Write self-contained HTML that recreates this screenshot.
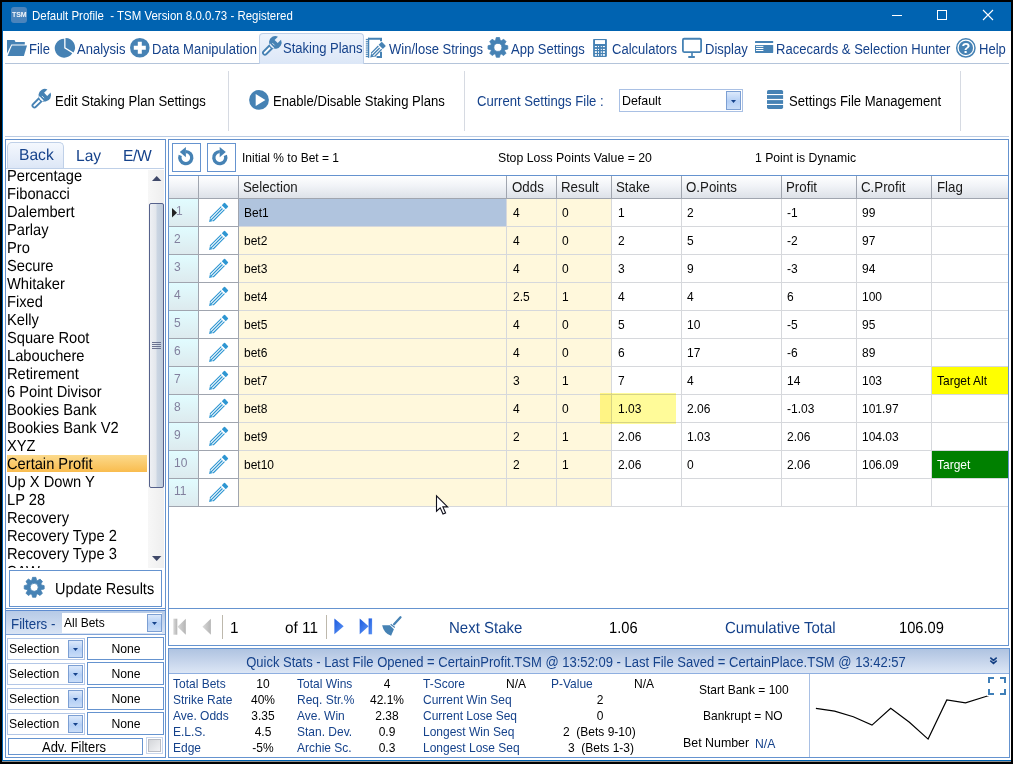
<!DOCTYPE html>
<html lang="en"><head><meta charset="utf-8"><title>TSM</title>
<style>
html,body{margin:0;padding:0}
body{width:1013px;height:764px;background:#000;position:relative;overflow:hidden;font-family:"Liberation Sans",sans-serif;}
.a{position:absolute;box-sizing:border-box}
.t{white-space:nowrap}
svg{display:block;overflow:visible}
</style></head><body>
<div class="a " style="left:2px;top:2px;width:1009px;height:760px;background:#fff"></div>
<div class="a " style="left:2px;top:2px;width:1px;height:759px;background:#0063B1"></div>
<div class="a " style="left:2px;top:760px;width:1009px;height:1px;background:#0063B1"></div>
<div class="a " style="left:2px;top:761px;width:1009px;height:1px;background:#8f8f8f"></div>
<div class="a " style="left:2px;top:2px;width:1009px;height:29px;background:#0063B1"></div>
<div class="a " style="left:11px;top:7px;width:16px;height:16px;background:#4A84BC;border-radius:3px"></div>
<div class="a t" style="left:12px;top:10px;line-height:10px;font-size:7.52px;color:#fff;transform:scaleX(0.9309);transform-origin:0 50%;font-weight:bold;letter-spacing:-0.1px;opacity:.92">TSM</div>
<div class="a t" style="left:32px;top:6px;line-height:20px;font-size:12.32px;color:#fff;transform:scaleX(0.9302);transform-origin:0 50%;">Default Profile&nbsp; - TSM Version 8.0.0.73 - Registered</div>
<div class="a " style="left:892px;top:15px;width:10px;height:1px;background:#fff"></div>
<div class="a " style="left:937px;top:10px;width:10px;height:10px;border:1px solid #fff"></div>
<svg class="a" style="left:983px;top:10px" width="10" height="10" viewBox="0 0 10 10"><path d="M0 0L10 10M10 0L0 10" stroke="#fff" stroke-width="1.1" fill="none"/></svg>
<div class="a " style="left:5px;top:63px;width:1004px;height:1px;background:#B4C4DA"></div>
<div class="a " style="left:259px;top:33px;width:105px;height:31px;background:linear-gradient(#EDF3FC,#DCE7F7);border:1px solid #BFD0E8;border-bottom:none;border-radius:4px 4px 0 0"></div>
<div class="a t" style="left:29.2px;top:39px;line-height:20px;font-size:14.01px;color:#15428B;transform:scaleX(0.93);transform-origin:0 50%;">File</div>
<div class="a t" style="left:77.4px;top:39px;line-height:20px;font-size:14.01px;color:#15428B;transform:scaleX(0.93);transform-origin:0 50%;">Analysis</div>
<div class="a t" style="left:152px;top:39px;line-height:20px;font-size:14.01px;color:#15428B;transform:scaleX(0.93);transform-origin:0 50%;">Data Manipulation</div>
<div class="a t" style="left:283.4px;top:38px;line-height:20px;font-size:14.01px;color:#15428B;transform:scaleX(0.93);transform-origin:0 50%;">Staking Plans</div>
<div class="a t" style="left:388.5px;top:39px;line-height:20px;font-size:14.01px;color:#15428B;transform:scaleX(0.93);transform-origin:0 50%;">Win/lose Strings</div>
<div class="a t" style="left:510.5px;top:39px;line-height:20px;font-size:14.01px;color:#15428B;transform:scaleX(0.93);transform-origin:0 50%;">App Settings</div>
<div class="a t" style="left:612.4px;top:39px;line-height:20px;font-size:14.01px;color:#15428B;transform:scaleX(0.93);transform-origin:0 50%;">Calculators</div>
<div class="a t" style="left:704.5px;top:39px;line-height:20px;font-size:14.01px;color:#15428B;transform:scaleX(0.93);transform-origin:0 50%;">Display</div>
<div class="a t" style="left:776px;top:39px;line-height:20px;font-size:14.01px;color:#15428B;transform:scaleX(0.93);transform-origin:0 50%;">Racecards &amp; Selection Hunter</div>
<div class="a t" style="left:978.6px;top:39px;line-height:20px;font-size:14.01px;color:#15428B;transform:scaleX(0.93);transform-origin:0 50%;">Help</div>
<svg class="a" style="left:7px;top:40px" width="20" height="16" viewBox="0 0 20 16"><path d="M0 0H7.5L8.5 2H17.8V4.6H4.3L0 13.5Z" fill="#4682B4"/><path d="M4.9 5.6H20L16.9 16H0.6Z" fill="#4682B4"/></svg>
<svg class="a" style="left:54px;top:37px" width="22" height="22" viewBox="0 0 22 22"><path d="M10.2 11.2L18.26 16.23A9.5 9.5 0 1 1 10.2 1.6999999999999993Z" fill="#4682B4"/><path d="M11.5 10.399999999999999L11.5 0.8999999999999986A9.5 9.5 0 0 1 19.56 15.43Z" fill="#4682B4"/></svg>
<svg class="a" style="left:130px;top:38px" width="20" height="20" viewBox="0 0 20 20"><circle cx="9.8" cy="9.8" r="9.8" fill="#4682B4"/><path d="M7.8 3.8h4v4h4v4h-4v4h-4v-4h-4v-4h4z" fill="#fff"/></svg>
<svg class="a" style="left:262px;top:36px" width="20" height="20" viewBox="0 0 20 20"><g transform="translate(13.3 6.4) rotate(45)"><path d="M-2.2 -1.2V-5.90A6.3 6.3 0 1 0 2.2 -5.90V-1.2ZM-2.9 4.5H2.9V14.6A2.9 2.9 0 0 1 -2.9 14.6Z" fill="#4682B4"/><path d="M-1 7.4H1V14.8A1 1 0 0 1 -1 14.8Z" fill="#fff"/><path d="M-1.6 2.6H1.6" stroke="#fff" stroke-width="0.7"/></g></svg>
<svg class="a" style="left:31px;top:89px" width="20" height="20" viewBox="0 0 20 20"><g transform="translate(13.8 6.2) rotate(45)"><path d="M-2.2 -1.2V-5.90A6.3 6.3 0 1 0 2.2 -5.90V-1.2ZM-2.9 4.5H2.9V14.6A2.9 2.9 0 0 1 -2.9 14.6Z" fill="#4682B4"/><path d="M-1 7.4H1V14.8A1 1 0 0 1 -1 14.8Z" fill="#fff"/><path d="M-1.6 2.6H1.6" stroke="#fff" stroke-width="0.7"/></g></svg>
<svg class="a" style="left:366px;top:34px" width="20" height="24" viewBox="0 0 20 24"><path d="M2 4.85H15V7.3M15 17.8V22.9H10.6" fill="none" stroke="#4682B4" stroke-width="2"/><path d="M2.6 3.8V23.8" stroke="#4682B4" stroke-width="1.3"/><rect x="-0.2" y="4.90" width="2.4" height="1" fill="#4682B4"/><rect x="-0.2" y="6.81" width="2.4" height="1" fill="#4682B4"/><rect x="-0.2" y="8.72" width="2.4" height="1" fill="#4682B4"/><rect x="-0.2" y="10.63" width="2.4" height="1" fill="#4682B4"/><rect x="-0.2" y="12.54" width="2.4" height="1" fill="#4682B4"/><rect x="-0.2" y="14.45" width="2.4" height="1" fill="#4682B4"/><rect x="-0.2" y="16.36" width="2.4" height="1" fill="#4682B4"/><rect x="-0.2" y="18.27" width="2.4" height="1" fill="#4682B4"/><rect x="-0.2" y="20.18" width="2.4" height="1" fill="#4682B4"/><rect x="-0.2" y="22.09" width="2.4" height="1" fill="#4682B4"/><g transform="translate(4.2 23.5) rotate(-45)"><path d="M0 0L4.8 -3.0H13.9V3.0H4.8Z" fill="#fff"/><path d="M0 0L4.8 -3.0L2.64 0L4.8 3.0Z" fill="#4682B4"/><path d="M3.84 -2.35H13.9M3.84 2.35H13.9" stroke="#4682B4" stroke-width="1.3" fill="none"/><path d="M2.40 0H13.3" stroke="#4682B4" stroke-width="1.4"/><path d="M14.9 -3.0H18.5Q19.3 -3.0 19.3 -2.2V2.2Q19.3 3.0 18.5 3.0H14.9Z" fill="#4682B4"/></g></svg>
<svg class="a" style="left:488px;top:37px" width="20" height="21" viewBox="0 0 20 21"><path d="M16.94 8.11L19.76 8.76L19.76 12.04L16.94 12.69L16.49 13.76L18.04 16.21L15.71 18.54L13.26 16.99L12.19 17.44L11.54 20.26L8.26 20.26L7.61 17.44L6.54 16.99L4.09 18.54L1.76 16.21L3.31 13.76L2.86 12.69L0.04 12.04L0.04 8.76L2.86 8.11L3.31 7.04L1.76 4.59L4.09 2.26L6.54 3.81L7.61 3.36L8.26 0.54L11.54 0.54L12.19 3.36L13.26 3.81L15.71 2.26L18.04 4.59L16.49 7.04ZM13.9 10.4A4.0 4.0 0 1 0 5.9 10.4A4.0 4.0 0 1 0 13.9 10.4Z" fill="#4682B4" fill-rule="evenodd" stroke="#4682B4" stroke-width="0.8" stroke-linejoin="round"/></svg>
<svg class="a" style="left:593px;top:39px" width="15" height="18" viewBox="0 0 15 18"><rect x="0.1" y="-0.1" width="13.8" height="18" rx="0.8" fill="#4682B4"/><rect x="2" y="1.1" width="10" height="3.9" fill="#fff"/><rect x="1.9" y="7.0" width="2.0" height="1.1" fill="#fff"/><rect x="5.0" y="7.0" width="1.0" height="1.1" fill="#fff"/><rect x="7.8" y="7.0" width="1.0" height="1.1" fill="#fff"/><rect x="9.9" y="7.0" width="2.0" height="1.1" fill="#fff"/><rect x="1.9" y="9.9" width="2.0" height="1.1" fill="#fff"/><rect x="5.0" y="9.9" width="1.0" height="1.1" fill="#fff"/><rect x="7.8" y="9.9" width="1.0" height="1.1" fill="#fff"/><rect x="9.9" y="9.9" width="2.0" height="1.1" fill="#fff"/><rect x="1.9" y="12.2" width="2.0" height="1.7" fill="#fff"/><rect x="5.0" y="12.2" width="1.0" height="1.7" fill="#fff"/><rect x="7.8" y="12.2" width="1.0" height="1.7" fill="#fff"/><rect x="9.9" y="12.2" width="2.0" height="1.7" fill="#fff"/><rect x="1.9" y="15.1" width="2.0" height="1.7" fill="#fff"/><rect x="5.0" y="15.1" width="1.0" height="1.7" fill="#fff"/><rect x="7.8" y="15.1" width="1.0" height="1.7" fill="#fff"/><rect x="9.9" y="15.1" width="2.0" height="1.7" fill="#fff"/></svg>
<svg class="a" style="left:682px;top:38px" width="20" height="20" viewBox="0 0 20 20"><rect x="0.9" y="0.75" width="18.2" height="13.3" rx="1.2" fill="#fff" stroke="#4682B4" stroke-width="1.8"/><rect x="9.2" y="14.9" width="1.6" height="3.6" fill="#4682B4"/><rect x="6.1" y="18" width="6.9" height="2" rx="0.8" fill="#4682B4"/></svg>
<svg class="a" style="left:755px;top:41px" width="19" height="13" viewBox="0 0 19 13"><rect x="0" y="0" width="18.2" height="2" rx="0.5" fill="#4682B4"/><rect x="0" y="4" width="18.2" height="7.9" rx="0.6" fill="#4682B4"/><path d="M1 5.4h7.4M1 7.5h7.4M1 9.5h7.4" stroke="#fff" stroke-width="1"/></svg>
<svg class="a" style="left:956px;top:38px" width="20" height="20" viewBox="0 0 20 20"><circle cx="9.85" cy="9.9" r="9.15" fill="#fff" stroke="#4682B4" stroke-width="1.5"/><circle cx="9.85" cy="9.9" r="7.15" fill="#4682B4"/><text x="9.9" y="15" font-family="Liberation Sans, sans-serif" font-weight="bold" font-size="14.5" fill="#fff" text-anchor="middle">?</text></svg>
<div class="a t" style="left:55.2px;top:91px;line-height:20px;font-size:14.08px;color:#000;transform:scaleX(0.9304);transform-origin:0 50%;">Edit Staking Plan Settings</div>
<div class="a " style="left:228px;top:71px;width:1px;height:60px;background:#D6DAE2"></div>
<svg class="a" style="left:249px;top:90px" width="20" height="20" viewBox="0 0 20 20"><circle cx="10" cy="9.9" r="9.9" fill="#4682B4"/><path d="M6.7 3.9L16.4 9.9L6.7 16Z" fill="#fff"/></svg>
<div class="a t" style="left:273.1px;top:91px;line-height:20px;font-size:14.08px;color:#000;transform:scaleX(0.9304);transform-origin:0 50%;">Enable/Disable Staking Plans</div>
<div class="a " style="left:464px;top:71px;width:1px;height:60px;background:#D6DAE2"></div>
<div class="a t" style="left:477.4px;top:91px;line-height:20px;font-size:14.08px;color:#15428B;transform:scaleX(0.9304);transform-origin:0 50%;">Current Settings File :</div>
<div class="a " style="left:619px;top:89px;width:124px;height:23px;background:#fff;border:1px solid #A9C0E4"></div>
<div class="a t" style="left:622px;top:91px;line-height:20px;font-size:13.33px;color:#000;transform:scaleX(0.9302);transform-origin:0 50%;">Default</div>
<div class="a " style="left:726px;top:91px;width:15px;height:19px;background:linear-gradient(#DCE9FB,#B4CFF5 55%,#C9DDF8);border:1px solid #7C9FD3"></div>
<svg class="a" style="left:731.0px;top:99.5px" width="5" height="3" viewBox="0 0 5 3"><path d="M0 0H5L2.5 3Z" fill="#15428B"/></svg>
<svg class="a" style="left:767px;top:90px" width="17" height="19" viewBox="0 0 17 19"><path d="M0 3.9V1.6Q0 0 1.6 0H14.5Q16.1 0 16.1 1.6V3.9Z" fill="#4682B4"/><rect x="0" y="5.1" width="16.1" height="3.8" fill="#4682B4"/><rect x="0" y="10.1" width="16.1" height="3.8" fill="#4682B4"/><path d="M0 15V17.3Q0 18.9 1.6 18.9H14.5Q16.1 18.9 16.1 17.3V15Z" fill="#4682B4"/></svg>
<div class="a t" style="left:789.4px;top:91px;line-height:20px;font-size:14.08px;color:#000;transform:scaleX(0.9304);transform-origin:0 50%;">Settings File Management</div>
<div class="a " style="left:960px;top:71px;width:1px;height:60px;background:#D6DAE2"></div>
<div class="a " style="left:5px;top:136px;width:1004px;height:1px;background:#BACBE3"></div>
<div class="a " style="left:5px;top:139px;width:161px;height:619px;border:1px solid #6593CF;background:#fff"></div>
<div class="a " style="left:7px;top:142px;width:57px;height:27px;background:linear-gradient(#F4F8FE,#DCE6F6);border:1px solid #BFD0E8;border-bottom:none;border-radius:5px 5px 0 0"></div>
<div class="a " style="left:6px;top:168px;width:158px;height:1px;background:#BFD0E8"></div>
<div class="a t" style="left:19px;top:146px;line-height:20px;font-size:16px;color:#15428B;transform:scaleX(0.975);transform-origin:0 50%;text-rendering:geometricPrecision;">Back</div>
<div class="a t" style="left:76px;top:147px;line-height:20px;font-size:16px;color:#15428B;transform:scaleX(0.975);transform-origin:0 50%;text-rendering:geometricPrecision;">Lay</div>
<div class="a t" style="left:123px;top:147px;line-height:20px;font-size:16px;color:#15428B;transform:scaleX(0.975);transform-origin:0 50%;letter-spacing:-0.4px;text-rendering:geometricPrecision;">E/W</div>
<div class="a " style="left:6px;top:169px;width:142px;height:399px;overflow:hidden"><div class="a t" style="left:1px;top:-1px;line-height:18px;font-size:16px;color:#000;text-rendering:geometricPrecision;transform:scaleX(0.9169);transform-origin:0 50%">Percentage</div><div class="a t" style="left:1px;top:17px;line-height:18px;font-size:16px;color:#000;text-rendering:geometricPrecision;transform:scaleX(0.9169);transform-origin:0 50%">Fibonacci</div><div class="a t" style="left:1px;top:35px;line-height:18px;font-size:16px;color:#000;text-rendering:geometricPrecision;transform:scaleX(0.9169);transform-origin:0 50%">Dalembert</div><div class="a t" style="left:1px;top:53px;line-height:18px;font-size:16px;color:#000;text-rendering:geometricPrecision;transform:scaleX(0.9169);transform-origin:0 50%">Parlay</div><div class="a t" style="left:1px;top:71px;line-height:18px;font-size:16px;color:#000;text-rendering:geometricPrecision;transform:scaleX(0.9169);transform-origin:0 50%">Pro</div><div class="a t" style="left:1px;top:89px;line-height:18px;font-size:16px;color:#000;text-rendering:geometricPrecision;transform:scaleX(0.9169);transform-origin:0 50%">Secure</div><div class="a t" style="left:1px;top:107px;line-height:18px;font-size:16px;color:#000;text-rendering:geometricPrecision;transform:scaleX(0.9169);transform-origin:0 50%">Whitaker</div><div class="a t" style="left:1px;top:125px;line-height:18px;font-size:16px;color:#000;text-rendering:geometricPrecision;transform:scaleX(0.9169);transform-origin:0 50%">Fixed</div><div class="a t" style="left:1px;top:143px;line-height:18px;font-size:16px;color:#000;text-rendering:geometricPrecision;transform:scaleX(0.9169);transform-origin:0 50%">Kelly</div><div class="a t" style="left:1px;top:161px;line-height:18px;font-size:16px;color:#000;text-rendering:geometricPrecision;transform:scaleX(0.9169);transform-origin:0 50%">Square Root</div><div class="a t" style="left:1px;top:179px;line-height:18px;font-size:16px;color:#000;text-rendering:geometricPrecision;transform:scaleX(0.9169);transform-origin:0 50%">Labouchere</div><div class="a t" style="left:1px;top:197px;line-height:18px;font-size:16px;color:#000;text-rendering:geometricPrecision;transform:scaleX(0.9169);transform-origin:0 50%">Retirement</div><div class="a t" style="left:1px;top:215px;line-height:18px;font-size:16px;color:#000;text-rendering:geometricPrecision;transform:scaleX(0.9169);transform-origin:0 50%">6 Point Divisor</div><div class="a t" style="left:1px;top:233px;line-height:18px;font-size:16px;color:#000;text-rendering:geometricPrecision;transform:scaleX(0.9169);transform-origin:0 50%">Bookies Bank</div><div class="a t" style="left:1px;top:251px;line-height:18px;font-size:16px;color:#000;text-rendering:geometricPrecision;transform:scaleX(0.9169);transform-origin:0 50%">Bookies Bank V2</div><div class="a t" style="left:1px;top:269px;line-height:18px;font-size:16px;color:#000;text-rendering:geometricPrecision;transform:scaleX(0.9169);transform-origin:0 50%">XYZ</div><div class="a" style="left:1px;top:286px;width:140px;height:17px;background:linear-gradient(#FCDA8C,#F9BC4E)"></div><div class="a t" style="left:1px;top:287px;line-height:18px;font-size:16px;color:#000;text-rendering:geometricPrecision;transform:scaleX(0.9169);transform-origin:0 50%">Certain Profit</div><div class="a t" style="left:1px;top:305px;line-height:18px;font-size:16px;color:#000;text-rendering:geometricPrecision;transform:scaleX(0.9169);transform-origin:0 50%">Up X Down Y</div><div class="a t" style="left:1px;top:323px;line-height:18px;font-size:16px;color:#000;text-rendering:geometricPrecision;transform:scaleX(0.9169);transform-origin:0 50%">LP 28</div><div class="a t" style="left:1px;top:341px;line-height:18px;font-size:16px;color:#000;text-rendering:geometricPrecision;transform:scaleX(0.9169);transform-origin:0 50%">Recovery</div><div class="a t" style="left:1px;top:359px;line-height:18px;font-size:16px;color:#000;text-rendering:geometricPrecision;transform:scaleX(0.9169);transform-origin:0 50%">Recovery Type 2</div><div class="a t" style="left:1px;top:377px;line-height:18px;font-size:16px;color:#000;text-rendering:geometricPrecision;transform:scaleX(0.9169);transform-origin:0 50%">Recovery Type 3</div><div class="a t" style="left:1px;top:395px;line-height:18px;font-size:16px;color:#000;text-rendering:geometricPrecision;transform:scaleX(0.9169);transform-origin:0 50%">SAW</div></div>
<div class="a " style="left:148px;top:170px;width:16px;height:398px;background:linear-gradient(90deg,#F7F7F7,#EEEEEE)"></div>
<svg class="a" style="left:152px;top:176px" width="9" height="5" viewBox="0 0 9 5"><path d="M0 5H9.4L4.7 0Z" fill="#3F4868"/></svg>
<svg class="a" style="left:152px;top:556px" width="9" height="5" viewBox="0 0 9 5"><path d="M0 0H9.4L4.7 5Z" fill="#3F4868"/></svg>
<div class="a " style="left:149px;top:203px;width:15px;height:285px;background:linear-gradient(90deg,#EEF0F4 0%,#E2E6EC 48%,#CBD6E3 52%,#BECADA 100%);border:1px solid #56628C;border-radius:2px"></div>
<svg class="a" style="left:152px;top:342px" width="9" height="8" viewBox="0 0 9 8"><path d="M0 .5H9M0 2.5H9M0 4.5H9M0 6.5H9" stroke="#6C7391" stroke-width="1"/></svg>
<div class="a " style="left:9px;top:570px;width:153px;height:37px;border:1px solid #6593CF;background:#fff"></div>
<div class="a t" style="left:55.3px;top:580px;line-height:20px;font-size:16px;color:#000;transform:scaleX(0.9062);transform-origin:0 50%;text-rendering:geometricPrecision;">Update Results</div>
<svg class="a" style="left:24px;top:577px" width="21" height="21" viewBox="0 0 21 21"><path d="M17.33 7.98L20.16 8.64L20.16 11.96L17.33 12.62L16.88 13.70L18.42 16.17L16.07 18.52L13.60 16.98L12.52 17.43L11.86 20.26L8.54 20.26L7.88 17.43L6.80 16.98L4.33 18.52L1.98 16.17L3.52 13.70L3.07 12.62L0.24 11.96L0.24 8.64L3.07 7.98L3.52 6.90L1.98 4.43L4.33 2.08L6.80 3.62L7.88 3.17L8.54 0.34L11.86 0.34L12.52 3.17L13.60 3.62L16.07 2.08L18.42 4.43L16.88 6.90ZM14.2 10.3A4.0 4.0 0 1 0 6.199999999999999 10.3A4.0 4.0 0 1 0 14.2 10.3Z" fill="#4682B4" fill-rule="evenodd" stroke="#4682B4" stroke-width="0.8" stroke-linejoin="round"/></svg>
<div class="a " style="left:6px;top:608px;width:159px;height:1px;background:#6593CF"></div>
<div class="a " style="left:6px;top:610px;width:159px;height:25px;background:linear-gradient(#B5C9E6,#DAE5F5)"></div>
<div class="a " style="left:6px;top:610px;width:159px;height:1px;background:#5E8CD0"></div>
<div class="a " style="left:6px;top:634px;width:159px;height:1px;background:#7FA3D8"></div>
<div class="a t" style="left:11px;top:614px;line-height:20px;font-size:14.33px;color:#15428B;transform:scaleX(0.9302);transform-origin:0 50%;">Filters -</div>
<div class="a " style="left:62px;top:613px;width:100px;height:20px;background:#fff"></div>
<div class="a t" style="left:64px;top:613px;line-height:20px;font-size:12.9px;color:#000;transform:scaleX(0.9302);transform-origin:0 50%;">All Bets</div>
<div class="a " style="left:147px;top:614px;width:15px;height:18px;background:linear-gradient(#DCE9FB,#B4CFF5 55%,#C9DDF8);border:1px solid #7C9FD3"></div>
<svg class="a" style="left:152.0px;top:622.0px" width="5" height="3" viewBox="0 0 5 3"><path d="M0 0H5L2.5 3Z" fill="#15428B"/></svg>
<div class="a " style="left:7px;top:638px;width:78px;height:22px;border:1px solid #B3C7E7;background:#fff"></div>
<div class="a t" style="left:9.3px;top:639px;line-height:20px;font-size:13.11px;color:#000;transform:scaleX(0.9306);transform-origin:0 50%;">Selection</div>
<div class="a " style="left:68px;top:640px;width:15px;height:18px;background:linear-gradient(#DCE9FB,#B4CFF5 55%,#C9DDF8);border:1px solid #7C9FD3"></div>
<svg class="a" style="left:73.0px;top:648.0px" width="5" height="3" viewBox="0 0 5 3"><path d="M0 0H5L2.5 3Z" fill="#15428B"/></svg>
<div class="a " style="left:87px;top:637px;width:77px;height:23px;border:1px solid #6593CF;background:#fff"></div>
<div class="a t" style="left:90.5px;width:70px;text-align:center;top:639px;line-height:20px;font-size:13.11px;color:#000;transform:scaleX(0.9306);">None</div>
<div class="a " style="left:7px;top:663px;width:78px;height:22px;border:1px solid #B3C7E7;background:#fff"></div>
<div class="a t" style="left:9.3px;top:664px;line-height:20px;font-size:13.11px;color:#000;transform:scaleX(0.9306);transform-origin:0 50%;">Selection</div>
<div class="a " style="left:68px;top:665px;width:15px;height:18px;background:linear-gradient(#DCE9FB,#B4CFF5 55%,#C9DDF8);border:1px solid #7C9FD3"></div>
<svg class="a" style="left:73.0px;top:673.0px" width="5" height="3" viewBox="0 0 5 3"><path d="M0 0H5L2.5 3Z" fill="#15428B"/></svg>
<div class="a " style="left:87px;top:662px;width:77px;height:23px;border:1px solid #6593CF;background:#fff"></div>
<div class="a t" style="left:90.5px;width:70px;text-align:center;top:664px;line-height:20px;font-size:13.11px;color:#000;transform:scaleX(0.9306);">None</div>
<div class="a " style="left:7px;top:688px;width:78px;height:22px;border:1px solid #B3C7E7;background:#fff"></div>
<div class="a t" style="left:9.3px;top:689px;line-height:20px;font-size:13.11px;color:#000;transform:scaleX(0.9306);transform-origin:0 50%;">Selection</div>
<div class="a " style="left:68px;top:690px;width:15px;height:18px;background:linear-gradient(#DCE9FB,#B4CFF5 55%,#C9DDF8);border:1px solid #7C9FD3"></div>
<svg class="a" style="left:73.0px;top:698.0px" width="5" height="3" viewBox="0 0 5 3"><path d="M0 0H5L2.5 3Z" fill="#15428B"/></svg>
<div class="a " style="left:87px;top:687px;width:77px;height:23px;border:1px solid #6593CF;background:#fff"></div>
<div class="a t" style="left:90.5px;width:70px;text-align:center;top:689px;line-height:20px;font-size:13.11px;color:#000;transform:scaleX(0.9306);">None</div>
<div class="a " style="left:7px;top:713px;width:78px;height:22px;border:1px solid #B3C7E7;background:#fff"></div>
<div class="a t" style="left:9.3px;top:714px;line-height:20px;font-size:13.11px;color:#000;transform:scaleX(0.9306);transform-origin:0 50%;">Selection</div>
<div class="a " style="left:68px;top:715px;width:15px;height:18px;background:linear-gradient(#DCE9FB,#B4CFF5 55%,#C9DDF8);border:1px solid #7C9FD3"></div>
<svg class="a" style="left:73.0px;top:723.0px" width="5" height="3" viewBox="0 0 5 3"><path d="M0 0H5L2.5 3Z" fill="#15428B"/></svg>
<div class="a " style="left:87px;top:712px;width:77px;height:23px;border:1px solid #6593CF;background:#fff"></div>
<div class="a t" style="left:90.5px;width:70px;text-align:center;top:714px;line-height:20px;font-size:13.11px;color:#000;transform:scaleX(0.9306);">None</div>
<div class="a " style="left:8px;top:738px;width:135px;height:17px;border:1px solid #6593CF;background:#fff"></div>
<div class="a t" style="left:14.0px;width:120px;text-align:center;top:737px;line-height:20px;font-size:13.97px;color:#000;transform:scaleX(0.9306);">Adv. Filters</div>
<div class="a " style="left:146px;top:737px;width:17px;height:17px;border:1px solid #C8D6EC;background:#fff"></div>
<div class="a " style="left:148px;top:739px;width:13px;height:13px;background:linear-gradient(135deg,#D4D6DA,#F2F3F5);border:1px solid #B8BCC4"></div>
<div class="a " style="left:168px;top:139px;width:841px;height:507px;border:1px solid #6593CF;background:#fff"></div>
<div class="a " style="left:172px;top:143px;width:29px;height:29px;border:1px solid #6593CF;background:#fff"></div>
<div class="a " style="left:207px;top:143px;width:29px;height:29px;border:1px solid #6593CF;background:#fff"></div>
<svg class="a" style="left:177px;top:148.1px" width="18" height="18" viewBox="0 0 18 18"><path d="M8.8 3.5999999999999996A6.0 6.0 0 1 1 3.24 7.35" fill="none" stroke="#4682B4" stroke-width="3.4"/><path d="M2.8 4.1L8.9 -1.1V9.3Z" fill="#4682B4"/></svg>
<svg class="a" style="left:211px;top:148.1px" width="18" height="18" viewBox="0 0 18 18"><g transform="translate(17.6 0) scale(-1 1)"><path d="M8.8 3.5999999999999996A6.0 6.0 0 1 1 3.24 7.35" fill="none" stroke="#4682B4" stroke-width="3.4"/><path d="M2.8 4.1L8.9 -1.1V9.3Z" fill="#4682B4"/></g></svg>
<div class="a t" style="left:242px;top:148px;line-height:20px;font-size:12.9px;color:#000;transform:scaleX(0.9302);transform-origin:0 50%;">Initial % to Bet = 1</div>
<div class="a t" style="left:498px;top:148px;line-height:20px;font-size:13.22px;color:#000;transform:scaleX(0.9304);transform-origin:0 50%;">Stop Loss Points Value = 20</div>
<div class="a t" style="left:755px;top:148px;line-height:20px;font-size:13.11px;color:#000;transform:scaleX(0.9306);transform-origin:0 50%;">1 Point is Dynamic</div>
<div class="a " style="left:169px;top:175px;width:839px;height:1px;background:#6593CF"></div>
<div class="a " style="left:169px;top:176px;width:839px;height:22px;background:linear-gradient(#FFFFFF,#F1F3F7 45%,#DDE1E8)"></div>
<div class="a " style="left:169px;top:198px;width:839px;height:1px;background:#A0A5AF"></div>
<div class="a " style="left:198px;top:176px;width:1px;height:22px;background:#A0A5AF"></div>
<div class="a " style="left:238px;top:176px;width:1px;height:22px;background:#A0A5AF"></div>
<div class="a " style="left:506px;top:176px;width:1px;height:22px;background:#A0A5AF"></div>
<div class="a " style="left:556px;top:176px;width:1px;height:22px;background:#A0A5AF"></div>
<div class="a " style="left:611px;top:176px;width:1px;height:22px;background:#A0A5AF"></div>
<div class="a " style="left:681px;top:176px;width:1px;height:22px;background:#A0A5AF"></div>
<div class="a " style="left:781px;top:176px;width:1px;height:22px;background:#A0A5AF"></div>
<div class="a " style="left:856px;top:176px;width:1px;height:22px;background:#A0A5AF"></div>
<div class="a " style="left:931px;top:176px;width:1px;height:22px;background:#A0A5AF"></div>
<div class="a t" style="left:243px;top:177px;line-height:20px;font-size:14.1px;color:#1a1a1a;transform:scaleX(0.9433);transform-origin:0 50%;">Selection</div>
<div class="a t" style="left:512px;top:177px;line-height:20px;font-size:14.1px;color:#1a1a1a;transform:scaleX(0.9433);transform-origin:0 50%;">Odds</div>
<div class="a t" style="left:561px;top:177px;line-height:20px;font-size:14.1px;color:#1a1a1a;transform:scaleX(0.9433);transform-origin:0 50%;">Result</div>
<div class="a t" style="left:616px;top:177px;line-height:20px;font-size:14.1px;color:#1a1a1a;transform:scaleX(0.9433);transform-origin:0 50%;">Stake</div>
<div class="a t" style="left:686px;top:177px;line-height:20px;font-size:14.1px;color:#1a1a1a;transform:scaleX(0.9433);transform-origin:0 50%;">O.Points</div>
<div class="a t" style="left:786px;top:177px;line-height:20px;font-size:14.1px;color:#1a1a1a;transform:scaleX(0.9433);transform-origin:0 50%;">Profit</div>
<div class="a t" style="left:861px;top:177px;line-height:20px;font-size:14.1px;color:#1a1a1a;transform:scaleX(0.9433);transform-origin:0 50%;">C.Profit</div>
<div class="a t" style="left:937px;top:177px;line-height:20px;font-size:14.1px;color:#1a1a1a;transform:scaleX(0.9433);transform-origin:0 50%;">Flag</div>
<div class="a " style="left:169px;top:199px;width:29px;height:27px;background:linear-gradient(#E1FCFF,#DDEAEE)"></div>
<div class="a " style="left:199px;top:199px;width:39px;height:27px;background:#fff"></div>
<div class="a " style="left:239px;top:199px;width:267px;height:27px;background:#B0C4DE"></div>
<div class="a " style="left:507px;top:199px;width:49px;height:27px;background:#FFF8DC"></div>
<div class="a " style="left:557px;top:199px;width:54px;height:27px;background:#FFF8DC"></div>
<div class="a " style="left:169px;top:226px;width:70px;height:1px;background:#A0A5AF"></div>
<div class="a " style="left:239px;top:226px;width:769px;height:1px;background:#D6D8DC"></div>
<div class="a " style="left:198px;top:199px;width:1px;height:28px;background:#A0A5AF"></div>
<div class="a " style="left:238px;top:199px;width:1px;height:28px;background:#A0A5AF"></div>
<div class="a " style="left:506px;top:199px;width:1px;height:28px;background:#D6D8DC"></div>
<div class="a " style="left:556px;top:199px;width:1px;height:28px;background:#D6D8DC"></div>
<div class="a " style="left:611px;top:199px;width:1px;height:28px;background:#D6D8DC"></div>
<div class="a " style="left:681px;top:199px;width:1px;height:28px;background:#D6D8DC"></div>
<div class="a " style="left:781px;top:199px;width:1px;height:28px;background:#D6D8DC"></div>
<div class="a " style="left:856px;top:199px;width:1px;height:28px;background:#D6D8DC"></div>
<div class="a " style="left:931px;top:199px;width:1px;height:28px;background:#D6D8DC"></div>
<div class="a t" style="left:176.3px;top:201px;line-height:20px;font-size:12.9px;color:#8C8CA8;transform:scaleX(0.9302);transform-origin:0 50%;">1</div>
<svg class="a" style="left:172px;top:207.5px" width="5" height="10" viewBox="0 0 5 10"><path d="M0 0L5 4.8L0 9.6Z" fill="#222"/></svg>
<svg class="a" style="left:209px;top:203px" width="20" height="20" viewBox="0 0 20 20"><g transform="translate(0.1 18.9) rotate(-45)"><path d="M0 0L4.4 -2.8H19.5V2.8H4.4Z" fill="#fff"/><path d="M0 0L4.4 -2.8L2.42 0L4.4 2.8Z" fill="#2E96D2"/><path d="M3.52 -2.25H19.5M3.52 2.25H19.5" stroke="#2E96D2" stroke-width="1.1" fill="none"/><path d="M2.20 0H18.9" stroke="#2E96D2" stroke-width="1.3"/><path d="M20.8 -2.8H23.8Q24.6 -2.8 24.6 -1.9999999999999998V1.9999999999999998Q24.6 2.8 23.8 2.8H20.8Z" fill="#2E96D2"/></g></svg>
<div class="a t" style="left:244px;top:203px;line-height:20px;font-size:12.9px;color:#000;transform:scaleX(0.9302);transform-origin:0 50%;">Bet1</div>
<div class="a t" style="left:512.5px;top:203px;line-height:20px;font-size:12.9px;color:#000;transform:scaleX(0.9302);transform-origin:0 50%;">4</div>
<div class="a t" style="left:562.3px;top:203px;line-height:20px;font-size:12.9px;color:#000;transform:scaleX(0.9302);transform-origin:0 50%;">0</div>
<div class="a t" style="left:618px;top:203px;line-height:20px;font-size:12.9px;color:#000;transform:scaleX(0.9302);transform-origin:0 50%;">1</div>
<div class="a t" style="left:687px;top:203px;line-height:20px;font-size:12.9px;color:#000;transform:scaleX(0.9302);transform-origin:0 50%;">2</div>
<div class="a t" style="left:787px;top:203px;line-height:20px;font-size:12.9px;color:#000;transform:scaleX(0.9302);transform-origin:0 50%;">-1</div>
<div class="a t" style="left:862px;top:203px;line-height:20px;font-size:12.9px;color:#000;transform:scaleX(0.9302);transform-origin:0 50%;">99</div>
<div class="a " style="left:169px;top:227px;width:29px;height:27px;background:linear-gradient(#E1FCFF,#DDEAEE)"></div>
<div class="a " style="left:199px;top:227px;width:39px;height:27px;background:#fff"></div>
<div class="a " style="left:239px;top:227px;width:267px;height:27px;background:#FFF8DC"></div>
<div class="a " style="left:507px;top:227px;width:49px;height:27px;background:#FFF8DC"></div>
<div class="a " style="left:557px;top:227px;width:54px;height:27px;background:#FFF8DC"></div>
<div class="a " style="left:169px;top:254px;width:70px;height:1px;background:#A0A5AF"></div>
<div class="a " style="left:239px;top:254px;width:769px;height:1px;background:#D6D8DC"></div>
<div class="a " style="left:198px;top:227px;width:1px;height:28px;background:#A0A5AF"></div>
<div class="a " style="left:238px;top:227px;width:1px;height:28px;background:#A0A5AF"></div>
<div class="a " style="left:506px;top:227px;width:1px;height:28px;background:#D6D8DC"></div>
<div class="a " style="left:556px;top:227px;width:1px;height:28px;background:#D6D8DC"></div>
<div class="a " style="left:611px;top:227px;width:1px;height:28px;background:#D6D8DC"></div>
<div class="a " style="left:681px;top:227px;width:1px;height:28px;background:#D6D8DC"></div>
<div class="a " style="left:781px;top:227px;width:1px;height:28px;background:#D6D8DC"></div>
<div class="a " style="left:856px;top:227px;width:1px;height:28px;background:#D6D8DC"></div>
<div class="a " style="left:931px;top:227px;width:1px;height:28px;background:#D6D8DC"></div>
<div class="a t" style="left:174.3px;top:229px;line-height:20px;font-size:12.9px;color:#82809E;transform:scaleX(0.9302);transform-origin:0 50%;">2</div>
<svg class="a" style="left:209px;top:231px" width="20" height="20" viewBox="0 0 20 20"><g transform="translate(0.1 18.9) rotate(-45)"><path d="M0 0L4.4 -2.8H19.5V2.8H4.4Z" fill="#fff"/><path d="M0 0L4.4 -2.8L2.42 0L4.4 2.8Z" fill="#2E96D2"/><path d="M3.52 -2.25H19.5M3.52 2.25H19.5" stroke="#2E96D2" stroke-width="1.1" fill="none"/><path d="M2.20 0H18.9" stroke="#2E96D2" stroke-width="1.3"/><path d="M20.8 -2.8H23.8Q24.6 -2.8 24.6 -1.9999999999999998V1.9999999999999998Q24.6 2.8 23.8 2.8H20.8Z" fill="#2E96D2"/></g></svg>
<div class="a t" style="left:244px;top:231px;line-height:20px;font-size:12.9px;color:#000;transform:scaleX(0.9302);transform-origin:0 50%;">bet2</div>
<div class="a t" style="left:512.5px;top:231px;line-height:20px;font-size:12.9px;color:#000;transform:scaleX(0.9302);transform-origin:0 50%;">4</div>
<div class="a t" style="left:562.3px;top:231px;line-height:20px;font-size:12.9px;color:#000;transform:scaleX(0.9302);transform-origin:0 50%;">0</div>
<div class="a t" style="left:618px;top:231px;line-height:20px;font-size:12.9px;color:#000;transform:scaleX(0.9302);transform-origin:0 50%;">2</div>
<div class="a t" style="left:687px;top:231px;line-height:20px;font-size:12.9px;color:#000;transform:scaleX(0.9302);transform-origin:0 50%;">5</div>
<div class="a t" style="left:787px;top:231px;line-height:20px;font-size:12.9px;color:#000;transform:scaleX(0.9302);transform-origin:0 50%;">-2</div>
<div class="a t" style="left:862px;top:231px;line-height:20px;font-size:12.9px;color:#000;transform:scaleX(0.9302);transform-origin:0 50%;">97</div>
<div class="a " style="left:169px;top:255px;width:29px;height:27px;background:linear-gradient(#E1FCFF,#DDEAEE)"></div>
<div class="a " style="left:199px;top:255px;width:39px;height:27px;background:#fff"></div>
<div class="a " style="left:239px;top:255px;width:267px;height:27px;background:#FFF8DC"></div>
<div class="a " style="left:507px;top:255px;width:49px;height:27px;background:#FFF8DC"></div>
<div class="a " style="left:557px;top:255px;width:54px;height:27px;background:#FFF8DC"></div>
<div class="a " style="left:169px;top:282px;width:70px;height:1px;background:#A0A5AF"></div>
<div class="a " style="left:239px;top:282px;width:769px;height:1px;background:#D6D8DC"></div>
<div class="a " style="left:198px;top:255px;width:1px;height:28px;background:#A0A5AF"></div>
<div class="a " style="left:238px;top:255px;width:1px;height:28px;background:#A0A5AF"></div>
<div class="a " style="left:506px;top:255px;width:1px;height:28px;background:#D6D8DC"></div>
<div class="a " style="left:556px;top:255px;width:1px;height:28px;background:#D6D8DC"></div>
<div class="a " style="left:611px;top:255px;width:1px;height:28px;background:#D6D8DC"></div>
<div class="a " style="left:681px;top:255px;width:1px;height:28px;background:#D6D8DC"></div>
<div class="a " style="left:781px;top:255px;width:1px;height:28px;background:#D6D8DC"></div>
<div class="a " style="left:856px;top:255px;width:1px;height:28px;background:#D6D8DC"></div>
<div class="a " style="left:931px;top:255px;width:1px;height:28px;background:#D6D8DC"></div>
<div class="a t" style="left:174.3px;top:257px;line-height:20px;font-size:12.9px;color:#82809E;transform:scaleX(0.9302);transform-origin:0 50%;">3</div>
<svg class="a" style="left:209px;top:259px" width="20" height="20" viewBox="0 0 20 20"><g transform="translate(0.1 18.9) rotate(-45)"><path d="M0 0L4.4 -2.8H19.5V2.8H4.4Z" fill="#fff"/><path d="M0 0L4.4 -2.8L2.42 0L4.4 2.8Z" fill="#2E96D2"/><path d="M3.52 -2.25H19.5M3.52 2.25H19.5" stroke="#2E96D2" stroke-width="1.1" fill="none"/><path d="M2.20 0H18.9" stroke="#2E96D2" stroke-width="1.3"/><path d="M20.8 -2.8H23.8Q24.6 -2.8 24.6 -1.9999999999999998V1.9999999999999998Q24.6 2.8 23.8 2.8H20.8Z" fill="#2E96D2"/></g></svg>
<div class="a t" style="left:244px;top:259px;line-height:20px;font-size:12.9px;color:#000;transform:scaleX(0.9302);transform-origin:0 50%;">bet3</div>
<div class="a t" style="left:512.5px;top:259px;line-height:20px;font-size:12.9px;color:#000;transform:scaleX(0.9302);transform-origin:0 50%;">4</div>
<div class="a t" style="left:562.3px;top:259px;line-height:20px;font-size:12.9px;color:#000;transform:scaleX(0.9302);transform-origin:0 50%;">0</div>
<div class="a t" style="left:618px;top:259px;line-height:20px;font-size:12.9px;color:#000;transform:scaleX(0.9302);transform-origin:0 50%;">3</div>
<div class="a t" style="left:687px;top:259px;line-height:20px;font-size:12.9px;color:#000;transform:scaleX(0.9302);transform-origin:0 50%;">9</div>
<div class="a t" style="left:787px;top:259px;line-height:20px;font-size:12.9px;color:#000;transform:scaleX(0.9302);transform-origin:0 50%;">-3</div>
<div class="a t" style="left:862px;top:259px;line-height:20px;font-size:12.9px;color:#000;transform:scaleX(0.9302);transform-origin:0 50%;">94</div>
<div class="a " style="left:169px;top:283px;width:29px;height:27px;background:linear-gradient(#E1FCFF,#DDEAEE)"></div>
<div class="a " style="left:199px;top:283px;width:39px;height:27px;background:#fff"></div>
<div class="a " style="left:239px;top:283px;width:267px;height:27px;background:#FFF8DC"></div>
<div class="a " style="left:507px;top:283px;width:49px;height:27px;background:#FFF8DC"></div>
<div class="a " style="left:557px;top:283px;width:54px;height:27px;background:#FFF8DC"></div>
<div class="a " style="left:169px;top:310px;width:70px;height:1px;background:#A0A5AF"></div>
<div class="a " style="left:239px;top:310px;width:769px;height:1px;background:#D6D8DC"></div>
<div class="a " style="left:198px;top:283px;width:1px;height:28px;background:#A0A5AF"></div>
<div class="a " style="left:238px;top:283px;width:1px;height:28px;background:#A0A5AF"></div>
<div class="a " style="left:506px;top:283px;width:1px;height:28px;background:#D6D8DC"></div>
<div class="a " style="left:556px;top:283px;width:1px;height:28px;background:#D6D8DC"></div>
<div class="a " style="left:611px;top:283px;width:1px;height:28px;background:#D6D8DC"></div>
<div class="a " style="left:681px;top:283px;width:1px;height:28px;background:#D6D8DC"></div>
<div class="a " style="left:781px;top:283px;width:1px;height:28px;background:#D6D8DC"></div>
<div class="a " style="left:856px;top:283px;width:1px;height:28px;background:#D6D8DC"></div>
<div class="a " style="left:931px;top:283px;width:1px;height:28px;background:#D6D8DC"></div>
<div class="a t" style="left:174.3px;top:285px;line-height:20px;font-size:12.9px;color:#82809E;transform:scaleX(0.9302);transform-origin:0 50%;">4</div>
<svg class="a" style="left:209px;top:287px" width="20" height="20" viewBox="0 0 20 20"><g transform="translate(0.1 18.9) rotate(-45)"><path d="M0 0L4.4 -2.8H19.5V2.8H4.4Z" fill="#fff"/><path d="M0 0L4.4 -2.8L2.42 0L4.4 2.8Z" fill="#2E96D2"/><path d="M3.52 -2.25H19.5M3.52 2.25H19.5" stroke="#2E96D2" stroke-width="1.1" fill="none"/><path d="M2.20 0H18.9" stroke="#2E96D2" stroke-width="1.3"/><path d="M20.8 -2.8H23.8Q24.6 -2.8 24.6 -1.9999999999999998V1.9999999999999998Q24.6 2.8 23.8 2.8H20.8Z" fill="#2E96D2"/></g></svg>
<div class="a t" style="left:244px;top:287px;line-height:20px;font-size:12.9px;color:#000;transform:scaleX(0.9302);transform-origin:0 50%;">bet4</div>
<div class="a t" style="left:512.5px;top:287px;line-height:20px;font-size:12.9px;color:#000;transform:scaleX(0.9302);transform-origin:0 50%;">2.5</div>
<div class="a t" style="left:562.3px;top:287px;line-height:20px;font-size:12.9px;color:#000;transform:scaleX(0.9302);transform-origin:0 50%;">1</div>
<div class="a t" style="left:618px;top:287px;line-height:20px;font-size:12.9px;color:#000;transform:scaleX(0.9302);transform-origin:0 50%;">4</div>
<div class="a t" style="left:687px;top:287px;line-height:20px;font-size:12.9px;color:#000;transform:scaleX(0.9302);transform-origin:0 50%;">4</div>
<div class="a t" style="left:787px;top:287px;line-height:20px;font-size:12.9px;color:#000;transform:scaleX(0.9302);transform-origin:0 50%;">6</div>
<div class="a t" style="left:862px;top:287px;line-height:20px;font-size:12.9px;color:#000;transform:scaleX(0.9302);transform-origin:0 50%;">100</div>
<div class="a " style="left:169px;top:311px;width:29px;height:27px;background:linear-gradient(#E1FCFF,#DDEAEE)"></div>
<div class="a " style="left:199px;top:311px;width:39px;height:27px;background:#fff"></div>
<div class="a " style="left:239px;top:311px;width:267px;height:27px;background:#FFF8DC"></div>
<div class="a " style="left:507px;top:311px;width:49px;height:27px;background:#FFF8DC"></div>
<div class="a " style="left:557px;top:311px;width:54px;height:27px;background:#FFF8DC"></div>
<div class="a " style="left:169px;top:338px;width:70px;height:1px;background:#A0A5AF"></div>
<div class="a " style="left:239px;top:338px;width:769px;height:1px;background:#D6D8DC"></div>
<div class="a " style="left:198px;top:311px;width:1px;height:28px;background:#A0A5AF"></div>
<div class="a " style="left:238px;top:311px;width:1px;height:28px;background:#A0A5AF"></div>
<div class="a " style="left:506px;top:311px;width:1px;height:28px;background:#D6D8DC"></div>
<div class="a " style="left:556px;top:311px;width:1px;height:28px;background:#D6D8DC"></div>
<div class="a " style="left:611px;top:311px;width:1px;height:28px;background:#D6D8DC"></div>
<div class="a " style="left:681px;top:311px;width:1px;height:28px;background:#D6D8DC"></div>
<div class="a " style="left:781px;top:311px;width:1px;height:28px;background:#D6D8DC"></div>
<div class="a " style="left:856px;top:311px;width:1px;height:28px;background:#D6D8DC"></div>
<div class="a " style="left:931px;top:311px;width:1px;height:28px;background:#D6D8DC"></div>
<div class="a t" style="left:174.3px;top:313px;line-height:20px;font-size:12.9px;color:#82809E;transform:scaleX(0.9302);transform-origin:0 50%;">5</div>
<svg class="a" style="left:209px;top:315px" width="20" height="20" viewBox="0 0 20 20"><g transform="translate(0.1 18.9) rotate(-45)"><path d="M0 0L4.4 -2.8H19.5V2.8H4.4Z" fill="#fff"/><path d="M0 0L4.4 -2.8L2.42 0L4.4 2.8Z" fill="#2E96D2"/><path d="M3.52 -2.25H19.5M3.52 2.25H19.5" stroke="#2E96D2" stroke-width="1.1" fill="none"/><path d="M2.20 0H18.9" stroke="#2E96D2" stroke-width="1.3"/><path d="M20.8 -2.8H23.8Q24.6 -2.8 24.6 -1.9999999999999998V1.9999999999999998Q24.6 2.8 23.8 2.8H20.8Z" fill="#2E96D2"/></g></svg>
<div class="a t" style="left:244px;top:315px;line-height:20px;font-size:12.9px;color:#000;transform:scaleX(0.9302);transform-origin:0 50%;">bet5</div>
<div class="a t" style="left:512.5px;top:315px;line-height:20px;font-size:12.9px;color:#000;transform:scaleX(0.9302);transform-origin:0 50%;">4</div>
<div class="a t" style="left:562.3px;top:315px;line-height:20px;font-size:12.9px;color:#000;transform:scaleX(0.9302);transform-origin:0 50%;">0</div>
<div class="a t" style="left:618px;top:315px;line-height:20px;font-size:12.9px;color:#000;transform:scaleX(0.9302);transform-origin:0 50%;">5</div>
<div class="a t" style="left:687px;top:315px;line-height:20px;font-size:12.9px;color:#000;transform:scaleX(0.9302);transform-origin:0 50%;">10</div>
<div class="a t" style="left:787px;top:315px;line-height:20px;font-size:12.9px;color:#000;transform:scaleX(0.9302);transform-origin:0 50%;">-5</div>
<div class="a t" style="left:862px;top:315px;line-height:20px;font-size:12.9px;color:#000;transform:scaleX(0.9302);transform-origin:0 50%;">95</div>
<div class="a " style="left:169px;top:339px;width:29px;height:27px;background:linear-gradient(#E1FCFF,#DDEAEE)"></div>
<div class="a " style="left:199px;top:339px;width:39px;height:27px;background:#fff"></div>
<div class="a " style="left:239px;top:339px;width:267px;height:27px;background:#FFF8DC"></div>
<div class="a " style="left:507px;top:339px;width:49px;height:27px;background:#FFF8DC"></div>
<div class="a " style="left:557px;top:339px;width:54px;height:27px;background:#FFF8DC"></div>
<div class="a " style="left:169px;top:366px;width:70px;height:1px;background:#A0A5AF"></div>
<div class="a " style="left:239px;top:366px;width:769px;height:1px;background:#D6D8DC"></div>
<div class="a " style="left:198px;top:339px;width:1px;height:28px;background:#A0A5AF"></div>
<div class="a " style="left:238px;top:339px;width:1px;height:28px;background:#A0A5AF"></div>
<div class="a " style="left:506px;top:339px;width:1px;height:28px;background:#D6D8DC"></div>
<div class="a " style="left:556px;top:339px;width:1px;height:28px;background:#D6D8DC"></div>
<div class="a " style="left:611px;top:339px;width:1px;height:28px;background:#D6D8DC"></div>
<div class="a " style="left:681px;top:339px;width:1px;height:28px;background:#D6D8DC"></div>
<div class="a " style="left:781px;top:339px;width:1px;height:28px;background:#D6D8DC"></div>
<div class="a " style="left:856px;top:339px;width:1px;height:28px;background:#D6D8DC"></div>
<div class="a " style="left:931px;top:339px;width:1px;height:28px;background:#D6D8DC"></div>
<div class="a t" style="left:174.3px;top:341px;line-height:20px;font-size:12.9px;color:#82809E;transform:scaleX(0.9302);transform-origin:0 50%;">6</div>
<svg class="a" style="left:209px;top:343px" width="20" height="20" viewBox="0 0 20 20"><g transform="translate(0.1 18.9) rotate(-45)"><path d="M0 0L4.4 -2.8H19.5V2.8H4.4Z" fill="#fff"/><path d="M0 0L4.4 -2.8L2.42 0L4.4 2.8Z" fill="#2E96D2"/><path d="M3.52 -2.25H19.5M3.52 2.25H19.5" stroke="#2E96D2" stroke-width="1.1" fill="none"/><path d="M2.20 0H18.9" stroke="#2E96D2" stroke-width="1.3"/><path d="M20.8 -2.8H23.8Q24.6 -2.8 24.6 -1.9999999999999998V1.9999999999999998Q24.6 2.8 23.8 2.8H20.8Z" fill="#2E96D2"/></g></svg>
<div class="a t" style="left:244px;top:343px;line-height:20px;font-size:12.9px;color:#000;transform:scaleX(0.9302);transform-origin:0 50%;">bet6</div>
<div class="a t" style="left:512.5px;top:343px;line-height:20px;font-size:12.9px;color:#000;transform:scaleX(0.9302);transform-origin:0 50%;">4</div>
<div class="a t" style="left:562.3px;top:343px;line-height:20px;font-size:12.9px;color:#000;transform:scaleX(0.9302);transform-origin:0 50%;">0</div>
<div class="a t" style="left:618px;top:343px;line-height:20px;font-size:12.9px;color:#000;transform:scaleX(0.9302);transform-origin:0 50%;">6</div>
<div class="a t" style="left:687px;top:343px;line-height:20px;font-size:12.9px;color:#000;transform:scaleX(0.9302);transform-origin:0 50%;">17</div>
<div class="a t" style="left:787px;top:343px;line-height:20px;font-size:12.9px;color:#000;transform:scaleX(0.9302);transform-origin:0 50%;">-6</div>
<div class="a t" style="left:862px;top:343px;line-height:20px;font-size:12.9px;color:#000;transform:scaleX(0.9302);transform-origin:0 50%;">89</div>
<div class="a " style="left:169px;top:367px;width:29px;height:27px;background:linear-gradient(#E1FCFF,#DDEAEE)"></div>
<div class="a " style="left:199px;top:367px;width:39px;height:27px;background:#fff"></div>
<div class="a " style="left:239px;top:367px;width:267px;height:27px;background:#FFF8DC"></div>
<div class="a " style="left:507px;top:367px;width:49px;height:27px;background:#FFF8DC"></div>
<div class="a " style="left:557px;top:367px;width:54px;height:27px;background:#FFF8DC"></div>
<div class="a " style="left:932px;top:367px;width:76px;height:27px;background:#FFFF00"></div>
<div class="a " style="left:169px;top:394px;width:70px;height:1px;background:#A0A5AF"></div>
<div class="a " style="left:239px;top:394px;width:769px;height:1px;background:#D6D8DC"></div>
<div class="a " style="left:198px;top:367px;width:1px;height:28px;background:#A0A5AF"></div>
<div class="a " style="left:238px;top:367px;width:1px;height:28px;background:#A0A5AF"></div>
<div class="a " style="left:506px;top:367px;width:1px;height:28px;background:#D6D8DC"></div>
<div class="a " style="left:556px;top:367px;width:1px;height:28px;background:#D6D8DC"></div>
<div class="a " style="left:611px;top:367px;width:1px;height:28px;background:#D6D8DC"></div>
<div class="a " style="left:681px;top:367px;width:1px;height:28px;background:#D6D8DC"></div>
<div class="a " style="left:781px;top:367px;width:1px;height:28px;background:#D6D8DC"></div>
<div class="a " style="left:856px;top:367px;width:1px;height:28px;background:#D6D8DC"></div>
<div class="a " style="left:931px;top:367px;width:1px;height:28px;background:#D6D8DC"></div>
<div class="a t" style="left:174.3px;top:369px;line-height:20px;font-size:12.9px;color:#82809E;transform:scaleX(0.9302);transform-origin:0 50%;">7</div>
<svg class="a" style="left:209px;top:371px" width="20" height="20" viewBox="0 0 20 20"><g transform="translate(0.1 18.9) rotate(-45)"><path d="M0 0L4.4 -2.8H19.5V2.8H4.4Z" fill="#fff"/><path d="M0 0L4.4 -2.8L2.42 0L4.4 2.8Z" fill="#2E96D2"/><path d="M3.52 -2.25H19.5M3.52 2.25H19.5" stroke="#2E96D2" stroke-width="1.1" fill="none"/><path d="M2.20 0H18.9" stroke="#2E96D2" stroke-width="1.3"/><path d="M20.8 -2.8H23.8Q24.6 -2.8 24.6 -1.9999999999999998V1.9999999999999998Q24.6 2.8 23.8 2.8H20.8Z" fill="#2E96D2"/></g></svg>
<div class="a t" style="left:244px;top:371px;line-height:20px;font-size:12.9px;color:#000;transform:scaleX(0.9302);transform-origin:0 50%;">bet7</div>
<div class="a t" style="left:512.5px;top:371px;line-height:20px;font-size:12.9px;color:#000;transform:scaleX(0.9302);transform-origin:0 50%;">3</div>
<div class="a t" style="left:562.3px;top:371px;line-height:20px;font-size:12.9px;color:#000;transform:scaleX(0.9302);transform-origin:0 50%;">1</div>
<div class="a t" style="left:618px;top:371px;line-height:20px;font-size:12.9px;color:#000;transform:scaleX(0.9302);transform-origin:0 50%;">7</div>
<div class="a t" style="left:687px;top:371px;line-height:20px;font-size:12.9px;color:#000;transform:scaleX(0.9302);transform-origin:0 50%;">4</div>
<div class="a t" style="left:787px;top:371px;line-height:20px;font-size:12.9px;color:#000;transform:scaleX(0.9302);transform-origin:0 50%;">14</div>
<div class="a t" style="left:862px;top:371px;line-height:20px;font-size:12.9px;color:#000;transform:scaleX(0.9302);transform-origin:0 50%;">103</div>
<div class="a t" style="left:937px;top:371px;line-height:20px;font-size:12.9px;color:#000;transform:scaleX(0.9302);transform-origin:0 50%;">Target Alt</div>
<div class="a " style="left:169px;top:395px;width:29px;height:27px;background:linear-gradient(#E1FCFF,#DDEAEE)"></div>
<div class="a " style="left:199px;top:395px;width:39px;height:27px;background:#fff"></div>
<div class="a " style="left:239px;top:395px;width:267px;height:27px;background:#FFF8DC"></div>
<div class="a " style="left:507px;top:395px;width:49px;height:27px;background:#FFF8DC"></div>
<div class="a " style="left:557px;top:395px;width:54px;height:27px;background:#FFF8DC"></div>
<div class="a " style="left:169px;top:422px;width:70px;height:1px;background:#A0A5AF"></div>
<div class="a " style="left:239px;top:422px;width:769px;height:1px;background:#D6D8DC"></div>
<div class="a " style="left:198px;top:395px;width:1px;height:28px;background:#A0A5AF"></div>
<div class="a " style="left:238px;top:395px;width:1px;height:28px;background:#A0A5AF"></div>
<div class="a " style="left:506px;top:395px;width:1px;height:28px;background:#D6D8DC"></div>
<div class="a " style="left:556px;top:395px;width:1px;height:28px;background:#D6D8DC"></div>
<div class="a " style="left:611px;top:395px;width:1px;height:28px;background:#D6D8DC"></div>
<div class="a " style="left:681px;top:395px;width:1px;height:28px;background:#D6D8DC"></div>
<div class="a " style="left:781px;top:395px;width:1px;height:28px;background:#D6D8DC"></div>
<div class="a " style="left:856px;top:395px;width:1px;height:28px;background:#D6D8DC"></div>
<div class="a " style="left:931px;top:395px;width:1px;height:28px;background:#D6D8DC"></div>
<div class="a t" style="left:174.3px;top:397px;line-height:20px;font-size:12.9px;color:#82809E;transform:scaleX(0.9302);transform-origin:0 50%;">8</div>
<svg class="a" style="left:209px;top:399px" width="20" height="20" viewBox="0 0 20 20"><g transform="translate(0.1 18.9) rotate(-45)"><path d="M0 0L4.4 -2.8H19.5V2.8H4.4Z" fill="#fff"/><path d="M0 0L4.4 -2.8L2.42 0L4.4 2.8Z" fill="#2E96D2"/><path d="M3.52 -2.25H19.5M3.52 2.25H19.5" stroke="#2E96D2" stroke-width="1.1" fill="none"/><path d="M2.20 0H18.9" stroke="#2E96D2" stroke-width="1.3"/><path d="M20.8 -2.8H23.8Q24.6 -2.8 24.6 -1.9999999999999998V1.9999999999999998Q24.6 2.8 23.8 2.8H20.8Z" fill="#2E96D2"/></g></svg>
<div class="a t" style="left:244px;top:399px;line-height:20px;font-size:12.9px;color:#000;transform:scaleX(0.9302);transform-origin:0 50%;">bet8</div>
<div class="a t" style="left:512.5px;top:399px;line-height:20px;font-size:12.9px;color:#000;transform:scaleX(0.9302);transform-origin:0 50%;">4</div>
<div class="a t" style="left:562.3px;top:399px;line-height:20px;font-size:12.9px;color:#000;transform:scaleX(0.9302);transform-origin:0 50%;">0</div>
<div class="a t" style="left:618px;top:399px;line-height:20px;font-size:12.9px;color:#000;transform:scaleX(0.9302);transform-origin:0 50%;">1.03</div>
<div class="a t" style="left:687px;top:399px;line-height:20px;font-size:12.9px;color:#000;transform:scaleX(0.9302);transform-origin:0 50%;">2.06</div>
<div class="a t" style="left:787px;top:399px;line-height:20px;font-size:12.9px;color:#000;transform:scaleX(0.9302);transform-origin:0 50%;">-1.03</div>
<div class="a t" style="left:862px;top:399px;line-height:20px;font-size:12.9px;color:#000;transform:scaleX(0.9302);transform-origin:0 50%;">101.97</div>
<div class="a " style="left:169px;top:423px;width:29px;height:27px;background:linear-gradient(#E1FCFF,#DDEAEE)"></div>
<div class="a " style="left:199px;top:423px;width:39px;height:27px;background:#fff"></div>
<div class="a " style="left:239px;top:423px;width:267px;height:27px;background:#FFF8DC"></div>
<div class="a " style="left:507px;top:423px;width:49px;height:27px;background:#FFF8DC"></div>
<div class="a " style="left:557px;top:423px;width:54px;height:27px;background:#FFF8DC"></div>
<div class="a " style="left:169px;top:450px;width:70px;height:1px;background:#A0A5AF"></div>
<div class="a " style="left:239px;top:450px;width:769px;height:1px;background:#D6D8DC"></div>
<div class="a " style="left:198px;top:423px;width:1px;height:28px;background:#A0A5AF"></div>
<div class="a " style="left:238px;top:423px;width:1px;height:28px;background:#A0A5AF"></div>
<div class="a " style="left:506px;top:423px;width:1px;height:28px;background:#D6D8DC"></div>
<div class="a " style="left:556px;top:423px;width:1px;height:28px;background:#D6D8DC"></div>
<div class="a " style="left:611px;top:423px;width:1px;height:28px;background:#D6D8DC"></div>
<div class="a " style="left:681px;top:423px;width:1px;height:28px;background:#D6D8DC"></div>
<div class="a " style="left:781px;top:423px;width:1px;height:28px;background:#D6D8DC"></div>
<div class="a " style="left:856px;top:423px;width:1px;height:28px;background:#D6D8DC"></div>
<div class="a " style="left:931px;top:423px;width:1px;height:28px;background:#D6D8DC"></div>
<div class="a t" style="left:174.3px;top:425px;line-height:20px;font-size:12.9px;color:#82809E;transform:scaleX(0.9302);transform-origin:0 50%;">9</div>
<svg class="a" style="left:209px;top:427px" width="20" height="20" viewBox="0 0 20 20"><g transform="translate(0.1 18.9) rotate(-45)"><path d="M0 0L4.4 -2.8H19.5V2.8H4.4Z" fill="#fff"/><path d="M0 0L4.4 -2.8L2.42 0L4.4 2.8Z" fill="#2E96D2"/><path d="M3.52 -2.25H19.5M3.52 2.25H19.5" stroke="#2E96D2" stroke-width="1.1" fill="none"/><path d="M2.20 0H18.9" stroke="#2E96D2" stroke-width="1.3"/><path d="M20.8 -2.8H23.8Q24.6 -2.8 24.6 -1.9999999999999998V1.9999999999999998Q24.6 2.8 23.8 2.8H20.8Z" fill="#2E96D2"/></g></svg>
<div class="a t" style="left:244px;top:427px;line-height:20px;font-size:12.9px;color:#000;transform:scaleX(0.9302);transform-origin:0 50%;">bet9</div>
<div class="a t" style="left:512.5px;top:427px;line-height:20px;font-size:12.9px;color:#000;transform:scaleX(0.9302);transform-origin:0 50%;">2</div>
<div class="a t" style="left:562.3px;top:427px;line-height:20px;font-size:12.9px;color:#000;transform:scaleX(0.9302);transform-origin:0 50%;">1</div>
<div class="a t" style="left:618px;top:427px;line-height:20px;font-size:12.9px;color:#000;transform:scaleX(0.9302);transform-origin:0 50%;">2.06</div>
<div class="a t" style="left:687px;top:427px;line-height:20px;font-size:12.9px;color:#000;transform:scaleX(0.9302);transform-origin:0 50%;">1.03</div>
<div class="a t" style="left:787px;top:427px;line-height:20px;font-size:12.9px;color:#000;transform:scaleX(0.9302);transform-origin:0 50%;">2.06</div>
<div class="a t" style="left:862px;top:427px;line-height:20px;font-size:12.9px;color:#000;transform:scaleX(0.9302);transform-origin:0 50%;">104.03</div>
<div class="a " style="left:169px;top:451px;width:29px;height:27px;background:linear-gradient(#E1FCFF,#DDEAEE)"></div>
<div class="a " style="left:199px;top:451px;width:39px;height:27px;background:#fff"></div>
<div class="a " style="left:239px;top:451px;width:267px;height:27px;background:#FFF8DC"></div>
<div class="a " style="left:507px;top:451px;width:49px;height:27px;background:#FFF8DC"></div>
<div class="a " style="left:557px;top:451px;width:54px;height:27px;background:#FFF8DC"></div>
<div class="a " style="left:932px;top:451px;width:76px;height:27px;background:#008000"></div>
<div class="a " style="left:169px;top:478px;width:70px;height:1px;background:#A0A5AF"></div>
<div class="a " style="left:239px;top:478px;width:769px;height:1px;background:#D6D8DC"></div>
<div class="a " style="left:198px;top:451px;width:1px;height:28px;background:#A0A5AF"></div>
<div class="a " style="left:238px;top:451px;width:1px;height:28px;background:#A0A5AF"></div>
<div class="a " style="left:506px;top:451px;width:1px;height:28px;background:#D6D8DC"></div>
<div class="a " style="left:556px;top:451px;width:1px;height:28px;background:#D6D8DC"></div>
<div class="a " style="left:611px;top:451px;width:1px;height:28px;background:#D6D8DC"></div>
<div class="a " style="left:681px;top:451px;width:1px;height:28px;background:#D6D8DC"></div>
<div class="a " style="left:781px;top:451px;width:1px;height:28px;background:#D6D8DC"></div>
<div class="a " style="left:856px;top:451px;width:1px;height:28px;background:#D6D8DC"></div>
<div class="a " style="left:931px;top:451px;width:1px;height:28px;background:#D6D8DC"></div>
<div class="a t" style="left:174.3px;top:453px;line-height:20px;font-size:12.9px;color:#82809E;transform:scaleX(0.9302);transform-origin:0 50%;">10</div>
<svg class="a" style="left:209px;top:455px" width="20" height="20" viewBox="0 0 20 20"><g transform="translate(0.1 18.9) rotate(-45)"><path d="M0 0L4.4 -2.8H19.5V2.8H4.4Z" fill="#fff"/><path d="M0 0L4.4 -2.8L2.42 0L4.4 2.8Z" fill="#2E96D2"/><path d="M3.52 -2.25H19.5M3.52 2.25H19.5" stroke="#2E96D2" stroke-width="1.1" fill="none"/><path d="M2.20 0H18.9" stroke="#2E96D2" stroke-width="1.3"/><path d="M20.8 -2.8H23.8Q24.6 -2.8 24.6 -1.9999999999999998V1.9999999999999998Q24.6 2.8 23.8 2.8H20.8Z" fill="#2E96D2"/></g></svg>
<div class="a t" style="left:244px;top:455px;line-height:20px;font-size:12.9px;color:#000;transform:scaleX(0.9302);transform-origin:0 50%;">bet10</div>
<div class="a t" style="left:512.5px;top:455px;line-height:20px;font-size:12.9px;color:#000;transform:scaleX(0.9302);transform-origin:0 50%;">2</div>
<div class="a t" style="left:562.3px;top:455px;line-height:20px;font-size:12.9px;color:#000;transform:scaleX(0.9302);transform-origin:0 50%;">1</div>
<div class="a t" style="left:618px;top:455px;line-height:20px;font-size:12.9px;color:#000;transform:scaleX(0.9302);transform-origin:0 50%;">2.06</div>
<div class="a t" style="left:687px;top:455px;line-height:20px;font-size:12.9px;color:#000;transform:scaleX(0.9302);transform-origin:0 50%;">0</div>
<div class="a t" style="left:787px;top:455px;line-height:20px;font-size:12.9px;color:#000;transform:scaleX(0.9302);transform-origin:0 50%;">2.06</div>
<div class="a t" style="left:862px;top:455px;line-height:20px;font-size:12.9px;color:#000;transform:scaleX(0.9302);transform-origin:0 50%;">106.09</div>
<div class="a t" style="left:937px;top:455px;line-height:20px;font-size:12.9px;color:#fff;transform:scaleX(0.9302);transform-origin:0 50%;">Target</div>
<div class="a " style="left:169px;top:479px;width:29px;height:27px;background:linear-gradient(#E1FCFF,#DDEAEE)"></div>
<div class="a " style="left:199px;top:479px;width:39px;height:27px;background:#fff"></div>
<div class="a " style="left:239px;top:479px;width:267px;height:27px;background:#FFF8DC"></div>
<div class="a " style="left:507px;top:479px;width:49px;height:27px;background:#FFF8DC"></div>
<div class="a " style="left:557px;top:479px;width:54px;height:27px;background:#FFF8DC"></div>
<div class="a " style="left:169px;top:506px;width:70px;height:1px;background:#A0A5AF"></div>
<div class="a " style="left:239px;top:506px;width:769px;height:1px;background:#D6D8DC"></div>
<div class="a " style="left:198px;top:479px;width:1px;height:28px;background:#A0A5AF"></div>
<div class="a " style="left:238px;top:479px;width:1px;height:28px;background:#A0A5AF"></div>
<div class="a " style="left:506px;top:479px;width:1px;height:28px;background:#D6D8DC"></div>
<div class="a " style="left:556px;top:479px;width:1px;height:28px;background:#D6D8DC"></div>
<div class="a " style="left:611px;top:479px;width:1px;height:28px;background:#D6D8DC"></div>
<div class="a " style="left:681px;top:479px;width:1px;height:28px;background:#D6D8DC"></div>
<div class="a " style="left:781px;top:479px;width:1px;height:28px;background:#D6D8DC"></div>
<div class="a " style="left:856px;top:479px;width:1px;height:28px;background:#D6D8DC"></div>
<div class="a " style="left:931px;top:479px;width:1px;height:28px;background:#D6D8DC"></div>
<div class="a t" style="left:174.3px;top:481px;line-height:20px;font-size:12.9px;color:#82809E;transform:scaleX(0.9302);transform-origin:0 50%;">11</div>
<svg class="a" style="left:209px;top:483px" width="20" height="20" viewBox="0 0 20 20"><g transform="translate(0.1 18.9) rotate(-45)"><path d="M0 0L4.4 -2.8H19.5V2.8H4.4Z" fill="#fff"/><path d="M0 0L4.4 -2.8L2.42 0L4.4 2.8Z" fill="#2E96D2"/><path d="M3.52 -2.25H19.5M3.52 2.25H19.5" stroke="#2E96D2" stroke-width="1.1" fill="none"/><path d="M2.20 0H18.9" stroke="#2E96D2" stroke-width="1.3"/><path d="M20.8 -2.8H23.8Q24.6 -2.8 24.6 -1.9999999999999998V1.9999999999999998Q24.6 2.8 23.8 2.8H20.8Z" fill="#2E96D2"/></g></svg>
<div class="a " style="left:600px;top:393px;width:76px;height:31px;background:#FFFB99;mix-blend-mode:multiply"></div>
<svg class="a" style="left:436px;top:495px" width="13" height="20" viewBox="0 0 13 20"><path d="M0.5 0.8V16.2L4.2 12.8L7 19L9.6 17.9L6.9 11.9H11.6Z" fill="#fff" stroke="#10101c" stroke-width="1.1" stroke-linejoin="miter"/></svg>
<div class="a " style="left:169px;top:608px;width:839px;height:1px;background:#6593CF"></div>
<svg width="0" height="0" style="position:absolute"><defs><linearGradient id="gg" x1="0" x2="1" y1="0" y2="0"><stop offset="0" stop-color="#DADADA"/><stop offset="1" stop-color="#B4B4B4"/></linearGradient><linearGradient id="gb" x1="0" x2="1" y1="0" y2="1"><stop offset="0" stop-color="#1A59DE"/><stop offset="1" stop-color="#6298F6"/></linearGradient></defs></svg>
<svg class="a" style="left:173px;top:618px" width="13" height="17" viewBox="0 0 13 17"><rect x="0.3" y="0.7" width="4" height="16" fill="url(#gg)"/><path d="M12.8 0.7V16.7L4.5 8.7Z" fill="url(#gg)"/></svg>
<svg class="a" style="left:202px;top:618px" width="9" height="17" viewBox="0 0 9 17"><path d="M8.9 0.7V16.7L0.4 8.7Z" fill="url(#gg)"/></svg>
<div class="a " style="left:222px;top:615px;width:1px;height:24px;background:#BDB8AC"></div>
<div class="a t" style="left:230px;top:619px;line-height:20px;font-size:16px;color:#000;transform:scaleX(0.9563);transform-origin:0 50%;text-rendering:geometricPrecision;">1</div>
<div class="a t" style="left:285px;top:619px;line-height:20px;font-size:16px;color:#000;transform:scaleX(0.9563);transform-origin:0 50%;text-rendering:geometricPrecision;">of 11</div>
<div class="a " style="left:326px;top:615px;width:1px;height:24px;background:#BDB8AC"></div>
<svg class="a" style="left:334px;top:618px" width="10" height="17" viewBox="0 0 10 17"><path d="M0.4 0.4V16.3L9.7 8.35Z" fill="url(#gb)"/></svg>
<svg class="a" style="left:359px;top:618px" width="14" height="17" viewBox="0 0 14 17"><path d="M0.7 0.4V16.3L9.6 8.35Z" fill="url(#gb)"/><rect x="9.6" y="0.4" width="3.5" height="15.9" fill="url(#gb)"/></svg>
<svg class="a" style="left:381px;top:616px" width="21" height="21" viewBox="0 0 21 21"><path d="M19.5 1.3L13.1 8.2" stroke="#4682B4" stroke-width="2.3" stroke-linecap="round"/><path d="M9.7 8.2L13.8 11.5" stroke="#4682B4" stroke-width="1.1"/><path d="M1.1 9.2L8.9 9.2L12.9 13.3L10.1 19.8Q3 17.5 1.1 9.2Z" fill="#4682B4"/></svg>
<div class="a t" style="left:449px;top:619px;line-height:20px;font-size:16px;color:#15428B;transform:scaleX(0.9375);transform-origin:0 50%;text-rendering:geometricPrecision;">Next Stake</div>
<div class="a t" style="left:608.5px;top:619px;line-height:20px;font-size:16px;color:#000;transform:scaleX(0.9169);transform-origin:0 50%;text-rendering:geometricPrecision;">1.06</div>
<div class="a t" style="left:725px;top:619px;line-height:20px;font-size:16px;color:#15428B;transform:scaleX(0.9375);transform-origin:0 50%;text-rendering:geometricPrecision;">Cumulative Total</div>
<div class="a t" style="left:899px;top:619px;line-height:20px;font-size:16px;color:#000;transform:scaleX(0.9169);transform-origin:0 50%;text-rendering:geometricPrecision;">106.09</div>
<div class="a " style="left:168px;top:648px;width:842px;height:110px;border:1px solid #6593CF;background:#fff"></div>
<div class="a " style="left:169px;top:649px;width:840px;height:24px;background:linear-gradient(#AFC3E1,#DCE6F5)"></div>
<div class="a " style="left:169px;top:673px;width:840px;height:1px;background:#8FAFE0"></div>
<div class="a t" style="left:176.0px;width:800px;text-align:center;top:652px;line-height:20px;font-size:14.01px;color:#15428B;transform:scaleX(0.93);">Quick Stats - Last File Opened = CertainProfit.TSM @ 13:52:09 - Last File Saved = CertainPlace.TSM @ 13:42:57</div>
<svg class="a" style="left:990px;top:657px" width="7" height="7" viewBox="0 0 7 7"><path d="M0.3 0.6L3.5 3.4L6.7 0.6M0.3 3.6L3.5 6.4L6.7 3.6" fill="none" stroke="#123E82" stroke-width="1.5"/></svg>
<div class="a t" style="left:173px;top:674px;line-height:20px;font-size:12.9px;color:#15428B;transform:scaleX(0.9302);transform-origin:0 50%;">Total Bets</div>
<div class="a t" style="left:232.5px;width:60px;text-align:center;top:674px;line-height:20px;font-size:12.9px;color:#000;transform:scaleX(0.9302);">10</div>
<div class="a t" style="left:297px;top:674px;line-height:20px;font-size:12.9px;color:#15428B;transform:scaleX(0.9302);transform-origin:0 50%;">Total Wins</div>
<div class="a t" style="left:357.0px;width:60px;text-align:center;top:674px;line-height:20px;font-size:12.9px;color:#000;transform:scaleX(0.9302);">4</div>
<div class="a t" style="left:423px;top:674px;line-height:20px;font-size:12.9px;color:#15428B;transform:scaleX(0.9302);transform-origin:0 50%;">T-Score</div>
<div class="a t" style="left:173px;top:690px;line-height:20px;font-size:12.9px;color:#15428B;transform:scaleX(0.9302);transform-origin:0 50%;">Strike Rate</div>
<div class="a t" style="left:232.5px;width:60px;text-align:center;top:690px;line-height:20px;font-size:12.9px;color:#000;transform:scaleX(0.9302);">40%</div>
<div class="a t" style="left:297px;top:690px;line-height:20px;font-size:12.9px;color:#15428B;transform:scaleX(0.9302);transform-origin:0 50%;">Req. Str.%</div>
<div class="a t" style="left:357.0px;width:60px;text-align:center;top:690px;line-height:20px;font-size:12.9px;color:#000;transform:scaleX(0.9302);">42.1%</div>
<div class="a t" style="left:423px;top:690px;line-height:20px;font-size:12.9px;color:#15428B;transform:scaleX(0.9302);transform-origin:0 50%;">Current Win Seq</div>
<div class="a t" style="left:173px;top:706px;line-height:20px;font-size:12.9px;color:#15428B;transform:scaleX(0.9302);transform-origin:0 50%;">Ave. Odds</div>
<div class="a t" style="left:232.5px;width:60px;text-align:center;top:706px;line-height:20px;font-size:12.9px;color:#000;transform:scaleX(0.9302);">3.35</div>
<div class="a t" style="left:297px;top:706px;line-height:20px;font-size:12.9px;color:#15428B;transform:scaleX(0.9302);transform-origin:0 50%;">Ave. Win</div>
<div class="a t" style="left:357.0px;width:60px;text-align:center;top:706px;line-height:20px;font-size:12.9px;color:#000;transform:scaleX(0.9302);">2.38</div>
<div class="a t" style="left:423px;top:706px;line-height:20px;font-size:12.9px;color:#15428B;transform:scaleX(0.9302);transform-origin:0 50%;">Current Lose Seq</div>
<div class="a t" style="left:173px;top:722px;line-height:20px;font-size:12.9px;color:#15428B;transform:scaleX(0.9302);transform-origin:0 50%;">E.L.S.</div>
<div class="a t" style="left:232.5px;width:60px;text-align:center;top:722px;line-height:20px;font-size:12.9px;color:#000;transform:scaleX(0.9302);">4.5</div>
<div class="a t" style="left:297px;top:722px;line-height:20px;font-size:12.9px;color:#15428B;transform:scaleX(0.9302);transform-origin:0 50%;">Stan. Dev.</div>
<div class="a t" style="left:357.0px;width:60px;text-align:center;top:722px;line-height:20px;font-size:12.9px;color:#000;transform:scaleX(0.9302);">0.9</div>
<div class="a t" style="left:423px;top:722px;line-height:20px;font-size:12.9px;color:#15428B;transform:scaleX(0.9302);transform-origin:0 50%;">Longest Win Seq</div>
<div class="a t" style="left:173px;top:738px;line-height:20px;font-size:12.9px;color:#15428B;transform:scaleX(0.9302);transform-origin:0 50%;">Edge</div>
<div class="a t" style="left:232.5px;width:60px;text-align:center;top:738px;line-height:20px;font-size:12.9px;color:#000;transform:scaleX(0.9302);">-5%</div>
<div class="a t" style="left:297px;top:738px;line-height:20px;font-size:12.9px;color:#15428B;transform:scaleX(0.9302);transform-origin:0 50%;">Archie Sc.</div>
<div class="a t" style="left:357.0px;width:60px;text-align:center;top:738px;line-height:20px;font-size:12.9px;color:#000;transform:scaleX(0.9302);">0.3</div>
<div class="a t" style="left:423px;top:738px;line-height:20px;font-size:12.9px;color:#15428B;transform:scaleX(0.9302);transform-origin:0 50%;">Longest Lose Seq</div>
<div class="a t" style="left:495.5px;width:40px;text-align:center;top:674px;line-height:20px;font-size:12.9px;color:#000;transform:scaleX(0.9302);">N/A</div>
<div class="a t" style="left:551px;top:674px;line-height:20px;font-size:12.9px;color:#15428B;transform:scaleX(0.9302);transform-origin:0 50%;">P-Value</div>
<div class="a t" style="left:624.0px;width:40px;text-align:center;top:674px;line-height:20px;font-size:12.9px;color:#000;transform:scaleX(0.9302);">N/A</div>
<div class="a t" style="left:580.0px;width:40px;text-align:center;top:690px;line-height:20px;font-size:12.9px;color:#000;transform:scaleX(0.9302);">2</div>
<div class="a t" style="left:580.0px;width:40px;text-align:center;top:706px;line-height:20px;font-size:12.9px;color:#000;transform:scaleX(0.9302);">0</div>
<div class="a t" style="left:562.5px;top:722px;line-height:20px;font-size:12.9px;color:#000;transform:scaleX(0.9302);transform-origin:0 50%;">2&nbsp; (Bets 9-10)</div>
<div class="a t" style="left:567.5px;top:738px;line-height:20px;font-size:12.9px;color:#000;transform:scaleX(0.9302);transform-origin:0 50%;">3&nbsp; (Bets 1-3)</div>
<div class="a t" style="left:699px;top:680px;line-height:20px;font-size:12.9px;color:#000;transform:scaleX(0.9302);transform-origin:0 50%;">Start Bank = 100</div>
<div class="a t" style="left:703px;top:706px;line-height:20px;font-size:12.9px;color:#000;transform:scaleX(0.9302);transform-origin:0 50%;">Bankrupt = NO</div>
<div class="a t" style="left:683px;top:733px;line-height:20px;font-size:13.33px;color:#000;transform:scaleX(0.9302);transform-origin:0 50%;">Bet Number</div>
<div class="a t" style="left:755px;top:734px;line-height:20px;font-size:13.11px;color:#15428B;transform:scaleX(0.9306);transform-origin:0 50%;">N/A</div>
<div class="a " style="left:809px;top:674px;width:1px;height:83px;background:#A9C0E4"></div>
<svg class="a" style="left:810px;top:674px" width="199" height="83" viewBox="0 0 199 83"><polyline points="5.9,34.3 24.6,37.1 43.3,42.7 62.0,51.1 80.7,34.3 99.4,48.3 118.1,65.1 136.8,25.9 155.5,28.8 174.2,23.0 192.9,17.2" fill="none" stroke="#000" stroke-width="1.2"/></svg>
<div class="a " style="left:987px;top:676px;width:20px;height:20px;background:#fff"></div>
<svg class="a" style="left:988px;top:677px" width="18" height="18" viewBox="0 0 18 18"><path d="M1 6V1H6M12 1H17V6M17 12V17H12M6 17H1V12" fill="none" stroke="#3F7FB8" stroke-width="2"/></svg>
</body></html>
